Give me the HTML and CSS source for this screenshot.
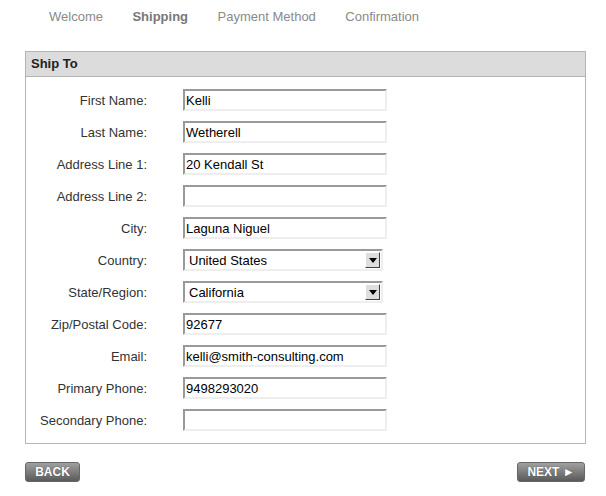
FILE: index.html
```html
<!DOCTYPE html>
<html lang="en">
<head>
  <meta charset="UTF-8">
  <title>Checkout - Shipping</title>
  <link rel="stylesheet" href="styles.css">
</head>
<body>
  <ul class="steps">
    <li>Welcome</li>
    <li class="active">Shipping</li>
    <li>Payment Method</li>
    <li>Confirmation</li>
  </ul>

  <div class="panel">
    <div class="panelHead">Ship To</div>
    <div class="form">
      <label>First Name:</label><input type="text" value="Kelli">
      <label>Last Name:</label><input type="text" value="Wetherell">
      <label>Address Line 1:</label><input type="text" value="20 Kendall St">
      <label>Address Line 2:</label><input type="text" value="">
      <label>City:</label><input type="text" value="Laguna Niguel">
      <label>Country:</label>
      <div class="selectBox">
        <select><option>United States</option></select>
        <span class="arrow"><svg width="8" height="5" viewBox="0 0 8 5"><path d="M0 0h8L4 5z" fill="#000"/></svg></span>
      </div>
      <label>State/Region:</label>
      <div class="selectBox">
        <select><option>California</option></select>
        <span class="arrow"><svg width="8" height="5" viewBox="0 0 8 5"><path d="M0 0h8L4 5z" fill="#000"/></svg></span>
      </div>
      <label>Zip/Postal Code:</label><input type="text" value="92677">
      <label>Email:</label><input type="text" value="kelli@smith-consulting.com">
      <label>Primary Phone:</label><input type="text" value="9498293020">
      <label>Secondary Phone:</label><input type="text" value="">
    </div>
  </div>

  <div class="actions">
    <button class="btn back">BACK</button>
    <button class="btn next">NEXT &#9658;</button>
  </div>
</body>
</html>
```

FILE: styles.css
```css
body { margin:0; padding:9px 20px 0 25px; font-family:"Liberation Sans", Arial, sans-serif; font-size:13px; color:#333; background:#fff; }
.steps { list-style:none; margin:0 0 26px 24px; padding:0; display:flex; gap:29.5px; line-height:16px; color:#8a8a8a; }
.steps .active { font-weight:bold; color:#777; }
.panel { border:1px solid #b4b4b4; }
.panelHead { background:#dcdcdc; border-bottom:1px solid #b4b4b4; height:24px; line-height:24px; padding-left:5px; font-weight:bold; color:#222; }
.form { display:grid; grid-template-columns:121px 1fr; column-gap:36px; grid-auto-rows:32px; align-items:center; padding:7px 0 7px; }
.form label { text-align:right; color:#333; }
.form input { box-sizing:border-box; width:204px; height:22px; margin:0; padding:0 1px; font:13px "Liberation Sans", Arial, sans-serif; color:#000; border-style:solid; border-width:2px; border-color:#999 #eee #eee #999; background:#fff; outline:none; }
.selectBox { position:relative; width:200px; height:22px; }
.selectBox select { appearance:none; -webkit-appearance:none; box-sizing:border-box; width:100%; height:22px; margin:0; padding:0 0 0 4px; font:13px "Liberation Sans", Arial, sans-serif; color:#000; border-style:solid; border-width:2px; border-color:#999 #eee #eee #999; background:#fff; border-radius:0; }
.arrow { position:absolute; top:3px; right:3px; width:15px; height:16px; box-sizing:border-box; background:#dedede; border:1px solid; border-color:#fff #404040 #404040 #fff; display:flex; align-items:center; justify-content:center; pointer-events:none; }
.actions { display:flex; justify-content:space-between; margin-top:18px; }
.btn { height:20px; padding:0; border:1px solid #666; border-radius:3px; background:linear-gradient(#a0a0a0, #5a5a5a); color:#fff; font:bold 12px "Liberation Sans", Arial, sans-serif; text-shadow:0 0 1px #444; line-height:18px; }
.back { width:55px; }
.next { width:68px; margin-right:1px; }
```
